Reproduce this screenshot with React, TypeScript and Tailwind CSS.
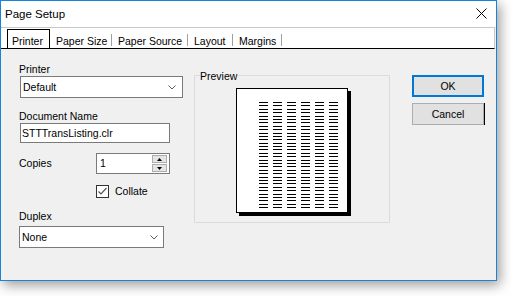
import { ReactNode } from 'react';

const ROWS = Array.from({ length: 32 }, (_, i) => 13 + Math.round(i * 3.39));
const COLS = [0, 1, 2, 3, 4, 5].map((i) => 22 + i * 14);

const TABS = [
    { label: 'Paper Size', width: 'w-[62px]' },
    { label: 'Paper Source', width: 'w-[76px]' },
    { label: 'Layout', width: 'w-[45px]' },
    { label: 'Margins', width: 'w-[49px]' },
];

function Chevron() {
    return (
        <svg width="8" height="5" viewBox="0 0 8 5" className="shrink-0">
            <path d="M0.5 0.5 L4 4 L7.5 0.5" fill="none" stroke="#5a5a5a" strokeWidth="1" />
        </svg>
    );
}

function Select({ value, width, chevronRight }: { value: string; width: string; chevronRight: string }) {
    return (
        <div className={`${width} h-[22px] border border-[#7a7a7a] bg-white flex items-center pl-[2px]`}>
            <span className="flex-1">{value}</span>
            <span className={chevronRight}>
                <Chevron />
            </span>
        </div>
    );
}

function Label({ children, className = '' }: { children: ReactNode; className?: string }) {
    return <div className={className}>{children}</div>;
}

function SpinArrow({ up }: { up?: boolean }) {
    return (
        <div className="w-[15px] h-[8px] border border-[#adadad] bg-[#e5e5e5] flex items-center justify-center">
            <svg width="5" height="3" viewBox="0 0 5 3">
                <path d={up ? 'M0 3 L2.5 0 L5 3 Z' : 'M0 0 L5 0 L2.5 3 Z'} fill="#000" />
            </svg>
        </div>
    );
}

export default function App() {
    return (
        <div className="w-[511px] h-[296px] bg-white font-['Liberation_Sans',Arial,sans-serif] text-[10.5px] leading-[13px] text-black">
            <div className="w-[497px] h-[281px] border border-[#1883d7] bg-[#f0f0f0] shadow-[3px_4px_12px_rgba(0,0,0,0.4)] flex flex-col">
                {/* title bar */}
                <div className="h-[26px] bg-white flex items-center justify-between pl-[4px] pr-[9px]">
                    <span className="text-[11.5px]">Page Setup</span>
                    <svg width="11" height="11" viewBox="0 0 11 11" className="mb-[1px]">
                        <path d="M0.5 0.5 L10.5 10.5 M10.5 0.5 L0.5 10.5" stroke="#000" strokeWidth="1" />
                    </svg>
                </div>

                {/* tab strip */}
                <div className="h-[22px] mr-[1px] bg-white border-t border-r border-b border-t-[#c8c8c8] border-r-[#c8c8c8] border-b-black flex items-end">
                    <div className="ml-[6px] w-[43px] h-[19px] border-x border-t border-black flex items-end pl-[4px]">
                        <span>Printer</span>
                    </div>
                    {TABS.map((t) => (
                        <div key={t.label} className={`${t.width} h-full flex items-end`}>
                            <span className="pl-[6px]">{t.label}</span>
                            <div className="ml-auto mb-[2px] w-px h-[12px] bg-[#a0a0a0]" />
                        </div>
                    ))}
                </div>

                {/* content */}
                <div className="flex-1 flex pl-[18px]">
                    {/* left column */}
                    <div className="w-[164px] flex flex-col pt-[14px]">
                        <Label>Printer</Label>
                        <div className="pl-[1px]">
                            <Select value="Default" width="w-[163px]" chevronRight="mr-[6px] mt-[1px]" />
                        </div>
                        <Label className="mt-[12px]">Document Name</Label>
                        <div className="ml-[1px] w-[150px] h-[20px] border border-[#7a7a7a] bg-white flex items-center pl-[1px]">
                            STTTransListing.clr
                        </div>
                        <div className="mt-[10px] flex items-center">
                            <span className="w-[77px]">Copies</span>
                            <div className="w-[74px] h-[21px] border border-[#7a7a7a] bg-white flex items-center pl-[3px] pr-[2px]">
                                <span className="flex-1">1</span>
                                <div className="flex flex-col gap-[1px]">
                                    <SpinArrow up />
                                    <SpinArrow />
                                </div>
                            </div>
                        </div>
                        <div className="mt-[11px] ml-[77px] flex items-center gap-[6px]">
                            <div className="w-[13px] h-[13px] border border-[#333] bg-white flex items-center justify-center">
                                <svg width="11" height="11" viewBox="0 0 11 11">
                                    <path d="M1.5 5.5 L4 8 L9.5 2" fill="none" stroke="#555" strokeWidth="1.2" />
                                </svg>
                            </div>
                            <span>Collate</span>
                        </div>
                        <Label className="mt-[12px]">Duplex</Label>
                        <div className="mt-[3px]">
                            <Select value="None" width="w-[145px]" chevronRight="mr-[5px] mt-[1px]" />
                        </div>
                    </div>

                    {/* preview group */}
                    <div className="ml-[11px] mt-[26px] w-[196px] h-[148px] border border-[#dcdcdc] relative">
                        <span className="absolute left-[5px] top-[-6px] bg-[#f0f0f0] pr-[1px]">Preview</span>
                        <div className="ml-[41px] mt-[12px] w-[112px] h-[125px] border border-black bg-white shadow-[3px_3px_0_#000]">
                            <svg width="110" height="123" viewBox="0 0 110 123" shapeRendering="crispEdges">
                                {COLS.map((x) =>
                                    ROWS.map((y) => <rect key={`${x}-${y}`} x={x} y={y} width="9" height="1" fill="#000" />)
                                )}
                            </svg>
                        </div>
                    </div>

                    {/* buttons */}
                    <div className="ml-[22px] mt-[26px] flex flex-col gap-[6px]">
                        <div className="w-[72px] h-[22px] border-2 border-[#0078d7] bg-[#e1e1e1] flex items-center justify-center">
                            OK
                        </div>
                        <div className="w-[72px] h-[22px] border border-[#adadad] bg-[#e1e1e1] flex items-center justify-center shadow-[1px_0_0_#000]">
                            Cancel
                        </div>
                    </div>
                </div>
            </div>
        </div>
    );
}
